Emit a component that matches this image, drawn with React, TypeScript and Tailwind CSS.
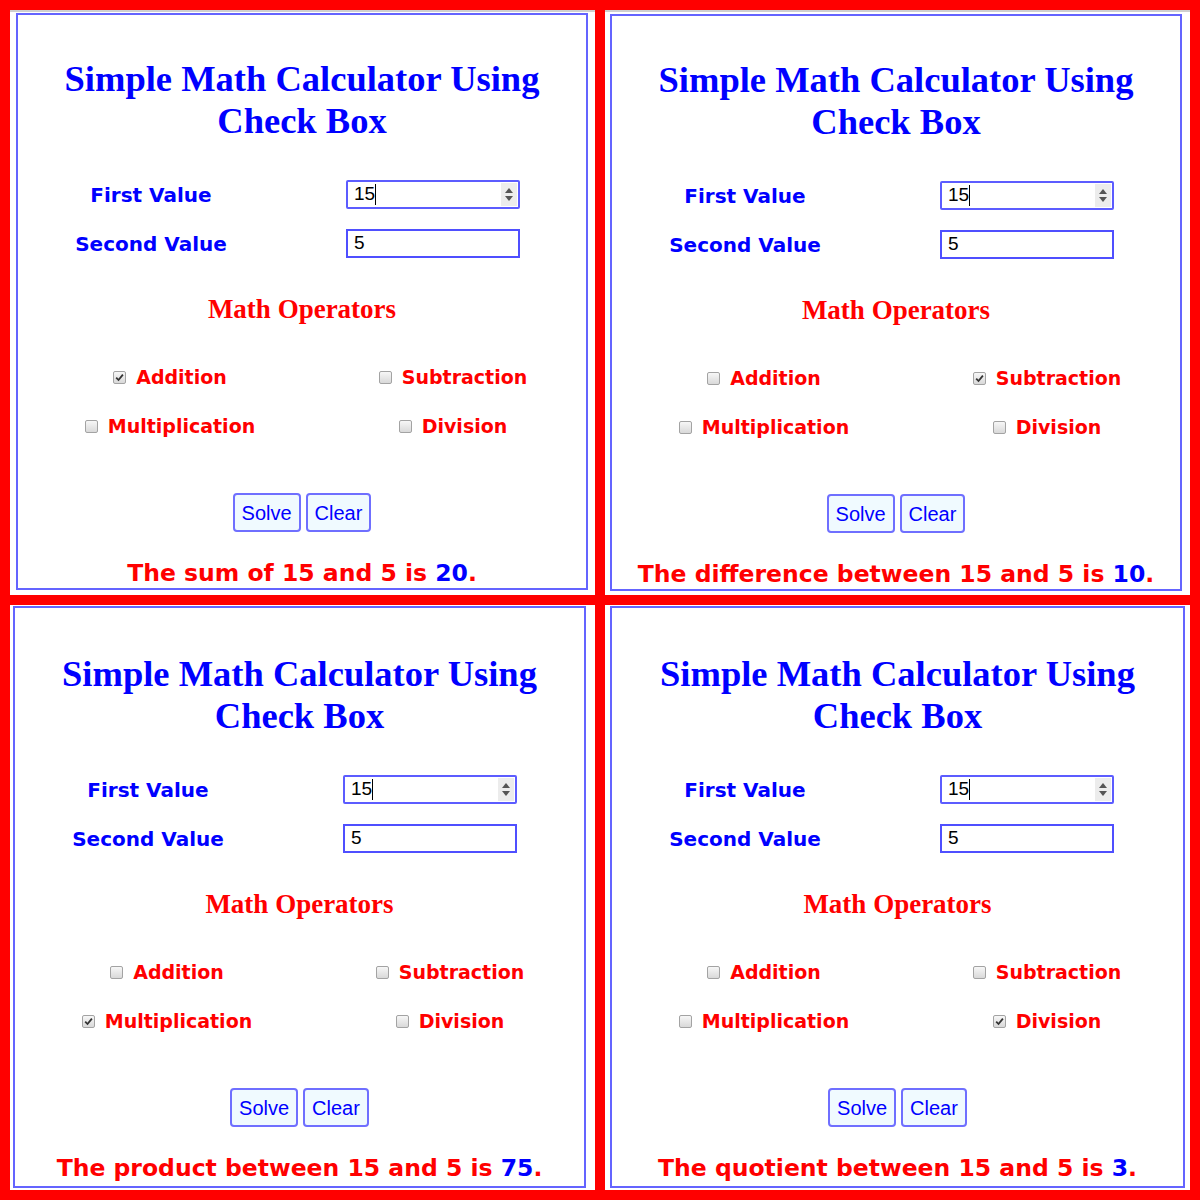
const comic = "font-['Comic_Sans_MS','DejaVu_Sans',sans-serif] font-bold";
const serif = "font-['Liberation_Serif','Times_New_Roman',serif] font-bold";
const arial = "font-['Liberation_Sans',Arial,sans-serif]";

type Op = 'add' | 'sub' | 'mul' | 'div';

const panels: { op: Op; text: string; answer: string; outer: string; inner: string }[] = [
  { op: 'add', text: 'The sum of 15 and 5 is ', answer: '20', outer: 'border-t-2 border-[#cfcfcf]', inner: 'ml-[6px] mr-[7px] mt-[1px] mb-[6px]' },
  { op: 'sub', text: 'The difference between 15 and 5 is ', answer: '10', outer: 'border-t-2 border-[#cfcfcf]', inner: 'ml-[5px] mr-[8px] mt-[2px] mb-[6px]' },
  { op: 'mul', text: 'The product between 15 and 5 is ', answer: '75', outer: '', inner: 'ml-[3px] mr-[9px] mt-[1px] mb-[2px] pt-[2px]' },
  { op: 'div', text: 'The quotient between 15 and 5 is ', answer: '3', outer: '', inner: 'ml-[5px] mr-[5px] mt-[1px] mb-[2px] pt-[2px]' },
];

function CheckBox({ checked }: { checked: boolean }) {
  return (
    <span className="w-[13px] h-[13px] rounded-[2px] border border-[#a3a3a3] bg-gradient-to-b from-[#f7f7f7] to-[#d9d9d9] flex items-center justify-center shrink-0">
      {checked && (
        <svg width="9" height="9" viewBox="0 0 9 9">
          <path d="M1.2 4.6 L3.5 7 L7.9 1.6" fill="none" stroke="#333" strokeWidth="1.8" />
        </svg>
      )}
    </span>
  );
}

function Option({ label, checked }: { label: string; checked: boolean }) {
  return (
    <div className="flex items-center justify-center gap-[10px] h-[30px]">
      <CheckBox checked={checked} />
      <span className={`${comic} text-[19px] text-[#ff0000]`}>{label}</span>
    </div>
  );
}

function Panel({ op, text, answer, outer, inner }: (typeof panels)[number]) {
  return (
    <div className={`bg-white flex flex-col ${outer}`}>
      <div className={`flex-1 border-2 border-[#6464ff] flex flex-col items-center ${inner}`}>
        <h1 className={`${serif} text-[36.5px] leading-[42px] text-[#0000ff] text-center mt-[43px]`}>
          Simple Math Calculator Using
          <br />
          Check Box
        </h1>

        <div className="self-start grid grid-cols-[266px_174px] gap-x-[62px] gap-y-[20px] mt-[38px]">
          <div className={`${comic} text-[20px] text-[#0000ff] flex items-center justify-center h-[29px]`}>First Value</div>
          <div className="h-[29px] border-2 border-[#5c5cff] rounded-[2px] flex items-center pl-[6px] pr-[1px]">
            <span className={`${arial} text-[19px] text-black`}>15</span>
            <span className="w-px h-[21px] bg-black" />
            <span className="ml-auto w-[16px] h-[23px] bg-[#ececec] flex flex-col items-center justify-center gap-[3px]">
              <svg width="8" height="5" viewBox="0 0 8 5"><path d="M4 0 L8 5 L0 5 Z" fill="#555" /></svg>
              <svg width="8" height="5" viewBox="0 0 8 5"><path d="M0 0 L8 0 L4 5 Z" fill="#555" /></svg>
            </span>
          </div>
          <div className={`${comic} text-[20px] text-[#0000ff] flex items-center justify-center h-[29px]`}>Second Value</div>
          <div className="h-[29px] border-2 border-[#4f4fff] flex items-center pl-[6px]">
            <span className={`${arial} text-[19px] text-black`}>5</span>
          </div>
        </div>

        <h2 className={`${serif} text-[27px] leading-[32px] text-[#ff0000] mt-[35px]`}>Math Operators</h2>

        <div className="self-start grid grid-cols-[304px_262px] gap-y-[19px] mt-[37px]">
          <Option label="Addition" checked={op === 'add'} />
          <Option label="Subtraction" checked={op === 'sub'} />
          <Option label="Multiplication" checked={op === 'mul'} />
          <Option label="Division" checked={op === 'div'} />
        </div>

        <div className="flex gap-[5px] mt-[52px]">
          <button className={`${arial} text-[20px] text-[#0000ff] h-[39px] px-[7px] bg-[#f0faff] border-2 border-[#6f6fff] rounded-[4px]`}>Solve</button>
          <button className={`${arial} text-[20px] text-[#0000ff] h-[39px] px-[7px] bg-[#f0faff] border-2 border-[#6f6fff] rounded-[4px]`}>Clear</button>
        </div>

        <p className={`${comic} text-[23.5px] leading-[30px] text-[#ff0000] mt-[26px] whitespace-nowrap`}>
          {text}
          <span className="text-[#0000ff]">{answer}</span>.
        </p>
      </div>
    </div>
  );
}

export default function App() {
  return (
    <div className="w-[1200px] h-[1200px] bg-[#ff0000] p-[10px] grid grid-cols-[585px_585px] grid-rows-[585px_585px] gap-[10px]">
      {panels.map((p) => (
        <Panel key={p.op} {...p} />
      ))}
    </div>
  );
}
